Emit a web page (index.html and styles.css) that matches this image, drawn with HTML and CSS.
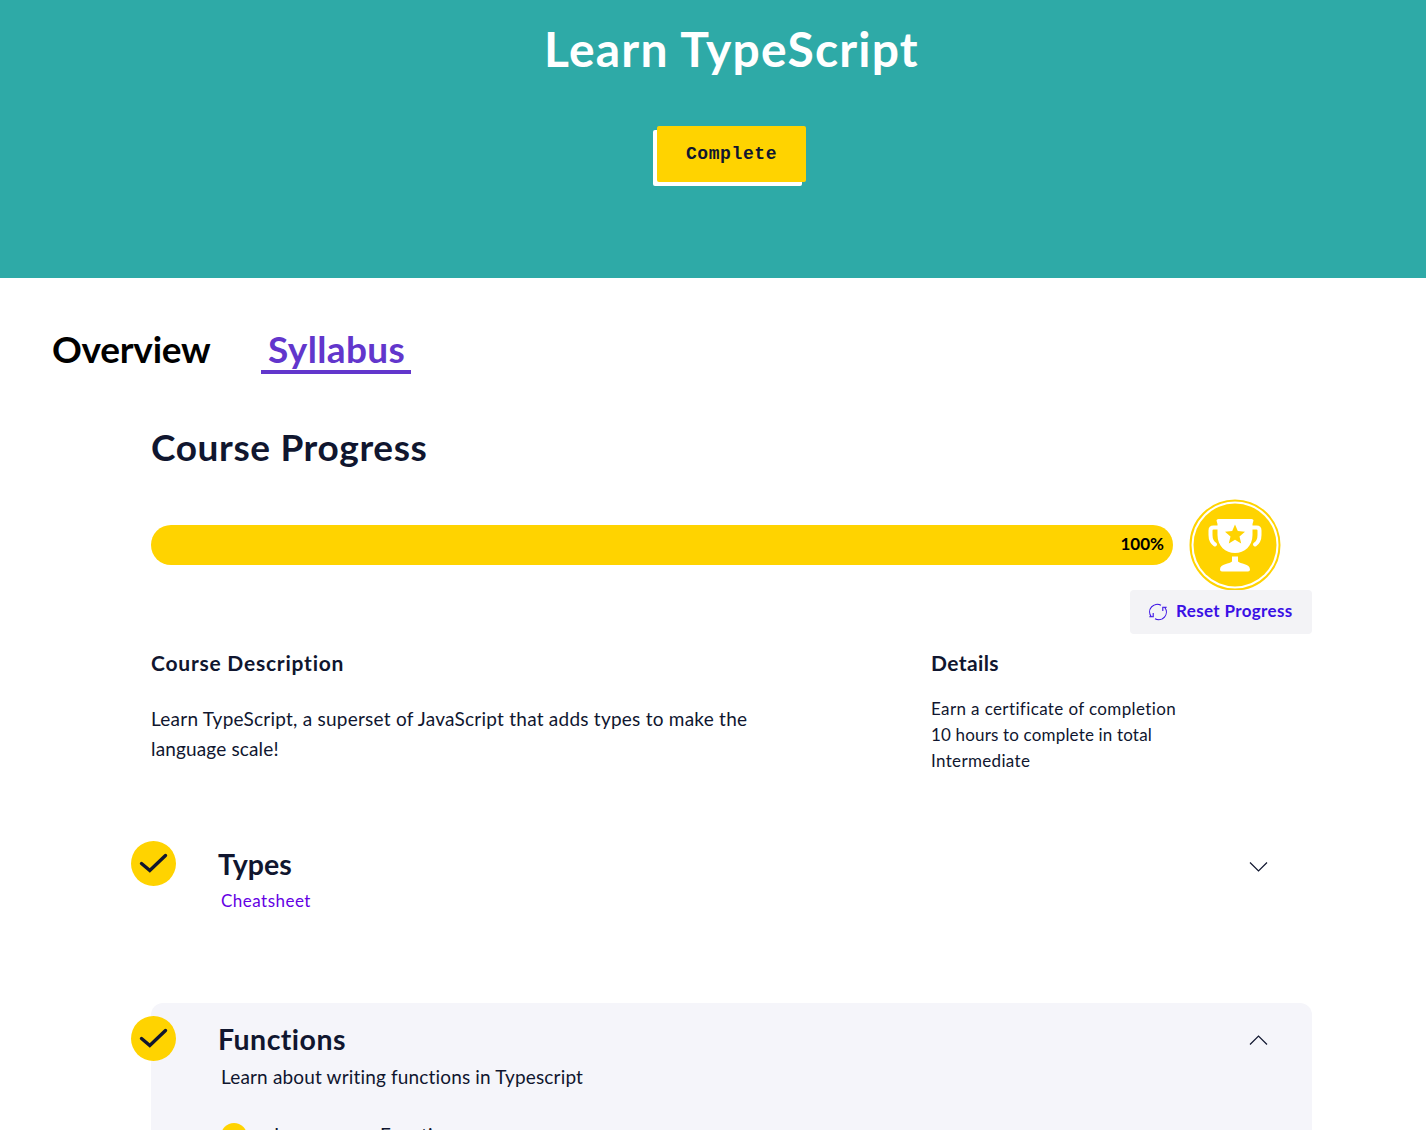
FILE: index.html
```html
<!DOCTYPE html>
<html lang="en">
<head>
<meta charset="utf-8">
<title>Learn TypeScript</title>
<link rel="stylesheet" href="styles.css">
</head>
<body>
<header class="hero">
  <h1 class="hero-title"><span>Learn TypeScript</span></h1>
  <button class="cta">Complete</button>
</header>
<nav class="tabs">
  <a class="tab"><span>Overview</span></a>
  <a class="tab tab-active"><span>Syllabus</span></a>
</nav>
<main class="content">
  <h2 class="section-title"><span>Course Progress</span></h2>
  <div class="progress-row">
    <div class="progress"><span>100%</span></div>
    <svg class="trophy" width="92" height="92" viewBox="0 0 92 92">
      <circle cx="46" cy="46" r="44.5" fill="#fff" stroke="#ffd300" stroke-width="2"/>
      <circle cx="46" cy="46" r="41.5" fill="#ffd300"/>
      <path d="M27.500 21.500Q27.500 20 29.500 20H62.500Q64.500 20 64.500 21.500L63.500 25V36C63.500 47 55.500 54 46 54S28.500 47 28.500 36V25Z" fill="#fff"/>
      <path d="M29 28.500H24.500Q21.500 28.500 21.500 31.500V36Q21.500 42.500 26 45.500M63 28.500H67.500Q70.500 28.500 70.500 31.500V36Q70.500 42.500 66 45.500" fill="none" stroke="#fff" stroke-width="4" stroke-linecap="round"/>
      <path d="M43 57.500H49V62.500C51 65 61 64.500 61 70.500Q61 72.500 59 72.500H33Q31 72.500 31 70.500C31 64.500 41 65 43 62.500Z" fill="#fff"/>
      <path d="M46 25.500l2.800 6.600 7.200.6-5.500 4.700 1.700 7-6.200-3.700-6.200 3.700 1.700-7-5.500-4.700 7.200-.6z" fill="#ffd300"/>
    </svg>
  </div>
  <button class="reset">
    <svg width="18" height="18" viewBox="0 0 18 18" fill="none" stroke="currentColor" stroke-width="1.1"><path d="M2.200 13.500A7.600 7.600 0 0 1 12 2.300M15.800 4.500A7.600 7.600 0 0 1 6 15.700M.3 13.800H4.200V10M17.700 4.200H13.800V8"/></svg>
    <span>Reset Progress</span>
  </button>
  <div class="info">
    <section>
      <h3 class="info-title t-desc"><span>Course Description</span></h3>
      <p class="description"><span class="d1">Learn TypeScript, a superset of JavaScript that adds types to make the</span><br><span class="d2">language scale!</span></p>
    </section>
    <section>
      <h3 class="info-title t-details"><span>Details</span></h3>
      <ul class="details"><li class="l1"><span>Earn a certificate of completion</span></li><li class="l2"><span>10 hours to complete in total</span></li><li class="l3"><span>Intermediate</span></li></ul>
    </section>
  </div>
  <article class="module">
    <svg class="check" width="45" height="45" viewBox="0 0 45 45"><circle cx="22.500" cy="22.500" r="22.500" fill="#ffd300"/><path d="M10.500 22.500l8.300 7L34.500 14.500" fill="none" stroke="#10162f" stroke-width="3.400" stroke-linecap="round"/></svg>
    <div class="module-body">
      <h2 class="module-title t-types"><span>Types</span></h2>
      <a class="cheatsheet"><span>Cheatsheet</span></a>
    </div>
    <svg class="chevron" width="19" height="10" viewBox="0 0 19 10"><path d="M1 .5L9.500 9 18 .5"/></svg>
  </article>
  <article class="module module-open">
    <svg class="check" width="45" height="45" viewBox="0 0 45 45"><circle cx="22.500" cy="22.500" r="22.500" fill="#ffd300"/><path d="M10.500 22.500l8.300 7L34.500 14.500" fill="none" stroke="#10162f" stroke-width="3.400" stroke-linecap="round"/></svg>
    <div class="module-body">
      <h2 class="module-title t-func"><span>Functions</span></h2>
      <p class="module-text"><span>Learn about writing functions in Typescript</span></p>
      <div class="lesson"><i class="lesson-dot"></i><span>Learn more: Functions</span></div>
    </div>
    <svg class="chevron" width="19" height="10" viewBox="0 0 19 10"><path d="M1 9.500L9.500 1 18 9.500"/></svg>
  </article>
</main>
</body>
</html>
```
FILE: styles.css
```css
* { box-sizing: border-box; margin: 0; padding: 0; }
html { height: 1130px; overflow: hidden; }
body { height: 1130px; overflow: hidden; background: #fff; color: #10162f; font-family: Lato, "Liberation Sans", sans-serif; font-variant-ligatures: none; }
button { border: 0; font: inherit; }
span { white-space: nowrap; }
.hero { height: 278px; padding: 19px 0 0 37px; background: #2eaaa7; display: flex; flex-direction: column; align-items: center; }
.hero-title { height: 60px; font-size: 48px; line-height: 59px; font-weight: 700; letter-spacing: 1.2px; color: #fff; }
.cta { width: 149px; height: 56px; margin-top: 47px; background: #ffd300; border-radius: 2px; box-shadow: -4px 4px 0 #fff; color: #10162f; font: 700 18px/56px "Liberation Mono", monospace; letter-spacing: .6px; }
.tabs { height: 150px; padding: 50px 0 0 52px; display: flex; align-items: flex-start; gap: 51px; }
.tab { height: 46px; line-height: 42px; font-size: 37px; font-weight: 700; letter-spacing: -.25px; color: #000; }
.tab:first-child { width: 158px; }
.tab-active { width: 150px; padding-left: 7px; letter-spacing: .38px; color: #6236cc; border-bottom: 4px solid #6236cc; }
.content { width: 1161px; margin-left: 151px; display: flex; flex-direction: column; }
.section-title { height: 71px; font-size: 37px; line-height: 37px; font-weight: 700; letter-spacing: .63px; }
.progress-row { height: 91px; display: flex; align-items: center; gap: 16px; }
.trophy { width: 92px; height: 92px; margin-right: -1px; flex: none; }
.progress { width: 1022px; height: 40px; padding-right: 9px; border-radius: 20px; background: #ffd300; color: #000; text-align: right; font-size: 17px; line-height: 38px; font-weight: 700; flex: none; }
.reset { align-self: flex-end; width: 182px; height: 44px; padding-left: 19px; border-radius: 4px; background: #f3f3f6; color: #3a10e5; display: flex; align-items: center; gap: 9px; font-size: 17px; font-weight: 700; line-height: 42px; letter-spacing: .36px; }
.reset span { height: 44px; }
.info { height: 207px; padding-top: 15px; display: grid; grid-template-columns: 780px 1fr; }
.info-title { font-size: 21px; line-height: 28px; }
.t-desc { letter-spacing: .77px; }
.t-details { letter-spacing: .4px; }
.description { margin-top: 27px; font-size: 19px; line-height: 30px; }
.d1 { letter-spacing: .24px; }
.d2 { letter-spacing: .15px; }
.details { list-style: none; margin-top: 19px; font-size: 17px; line-height: 26px; }
.l1 { letter-spacing: .38px; }
.l2 { letter-spacing: .17px; }
.l3 { letter-spacing: .34px; }
.module { height: 162px; display: flex; align-items: flex-start; }
.check { margin-left: -20px; flex: none; }
.module-body { width: 1030px; margin-left: 42px; flex: none; }
.module-title { font-size: 28.5px; line-height: 46px; }
.t-func { letter-spacing: .45px; }
.cheatsheet { display: block; padding-left: 3px; font-size: 17px; line-height: 28px; letter-spacing: .48px; color: #6400e4; }
.chevron { margin: 21px 0 0 1px; fill: none; stroke: #10162f; stroke-width: 1.2; flex: none; }
.module-open { height: 127px; padding-top: 13px; border-radius: 12px 12px 0 0; background: #f5f5fa; }
.module-open .chevron { margin-top: 19px; }
.module-text { padding-left: 3px; font-size: 19px; line-height: 30px; letter-spacing: .16px; }
.lesson { margin: 31px 0 0 3px; height: 7px; display: flex; gap: 27px; font-size: 19px; line-height: 30px; letter-spacing: .2px; }
.lesson span { margin-top: -3px; }
.lesson-dot { width: 26px; height: 26px; border-radius: 50%; background: #ffd300; flex: none; }
```
